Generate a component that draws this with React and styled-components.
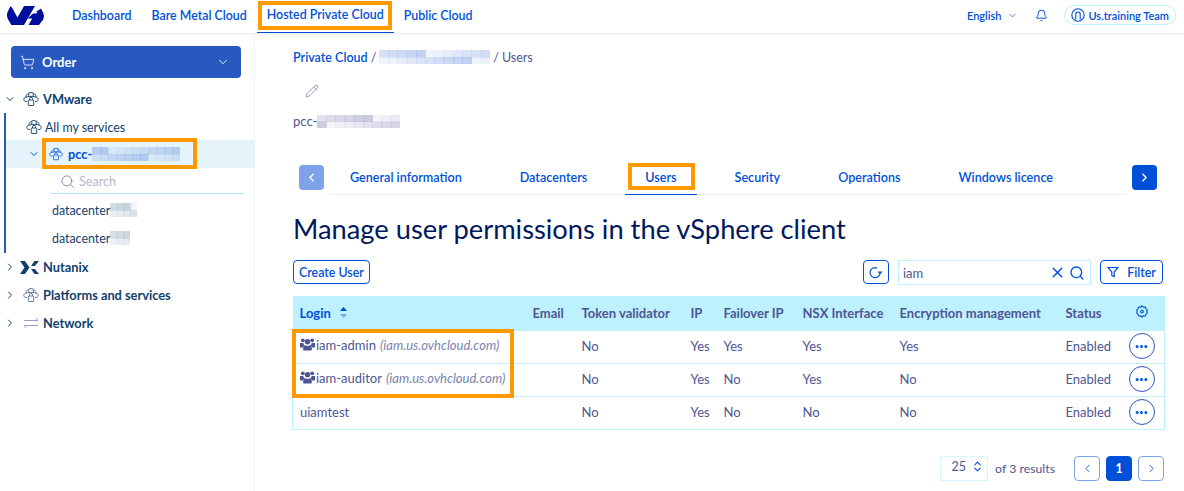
import React from "react";
import styled, { createGlobalStyle } from "styled-components";
import { ChevronDown, ChevronRight, ChevronLeft, ChevronsUpDown, X, Search, ShoppingCart, Bell, Pencil, Ellipsis } from "lucide-react";

const BLUE = "#0050d7";
const NAVY = "#00185e";
const TEXT = "#4d5693";
const ORANGE = "#ff9900";
const FONT = `"Lato", "Noto Sans", sans-serif`;

const Global = createGlobalStyle`
  html, body { margin: 0; padding: 0; height: 491px; overflow: hidden; background: #fff; }
  body { font-family: ${FONT}; font-size: 14px; color: ${TEXT}; }
  * { box-sizing: border-box; }
`;

const Page = styled.div`
  width: 1184px;
  height: 491px;
  display: flex;
  flex-direction: column;
  overflow: hidden;
`;

const TopBar = styled.header`
  height: 34px;
  flex: none;
  display: flex;
  align-items: stretch;
  padding: 0 8px 0 7px;
  border-bottom: 1px solid #eef0f7;
  box-shadow: 0 1px 2px rgba(0, 14, 156, 0.05);
`;

const LogoWrap = styled.div`
  width: 39px;
  display: flex;
  align-items: center;
  padding-bottom: 3px;
`;

const MainNav = styled.nav`
  display: flex;
  margin-left: 16px;
`;

const NavItem = styled.div`
  display: flex;
  align-items: center;
  height: 33px;
  padding: 0 10px 3px;
  color: ${BLUE};
  font-weight: 600;
  font-size: 12.4px;
  white-space: nowrap;
  position: relative;
  ${(p) => p.$active && `border-bottom: 1px solid ${BLUE};`}
`;

const Highlight = styled.span`
  position: absolute;
  border: 4px solid ${ORANGE};
  pointer-events: none;
`;

const TopRight = styled.div`
  margin-left: auto;
  display: flex;
  align-items: center;
  color: ${BLUE};
  font-weight: 600;
  font-size: 11px;
  padding-bottom: 3px;
`;

const Lang = styled.div`
  display: flex;
  align-items: center;
  gap: 6px;
  margin-right: 17px;
`;

const Pill = styled.div`
  display: flex;
  align-items: center;
  gap: 3px;
  height: 20px;
  margin-left: 16px;
  padding: 0 6px;
  border: 1px solid #bef1ff;
  border-radius: 10px;
`;

const Body = styled.div`
  flex: 1;
  display: flex;
  min-height: 0;
`;

const Sidebar = styled.aside`
  width: 255px;
  flex: none;
  border-right: 1px solid #eef0f7;
  padding-top: 12px;
`;

const OrderButton = styled.div`
  height: 32px;
  margin: 0 13px 0 11px;
  padding: 0 11px 0 9px;
  border-radius: 4px;
  background: #2859c0;
  color: #fff;
  font-weight: 700;
  font-size: 13px;
  display: flex;
  align-items: center;
  gap: 7px;
  svg:last-child { margin-left: auto; }
`;

const Tree = styled.div`
  margin-top: 7px;
`;

const TreeRow = styled.div`
  height: ${(p) => p.$height || 28}px;
  display: flex;
  align-items: center;
  padding-left: ${(p) => p.$indent || 0}px;
  padding-top: ${(p) => p.$nudge || 0}px;
  margin-top: ${(p) => p.$top || 0}px;
  font-size: ${(p) => (p.$strong ? 12.8 : 12.4)}px;
  color: #113f6d;
  font-weight: ${(p) => (p.$strong ? 700 : 400)};
  white-space: nowrap;
  background: ${(p) => (p.$selected ? "#e5f3fa" : "transparent")};
`;

const Caret = styled.span`
  width: 12px;
  display: inline-flex;
  justify-content: center;
  color: #113f6d;
  flex: none;
`;

const IconSlot = styled.span`
  width: ${(p) => p.$w || 18}px;
  margin: 0 ${(p) => p.$gap ?? 3}px 0 ${(p) => p.$left ?? 5}px;
  display: inline-flex;
  align-items: center;
  justify-content: center;
  flex: none;
`;

const Branch = styled.div`
  margin-left: 4px;
  padding-bottom: 1px;
  border-left: 2px solid #2859c0;
`;

const SelectedLabel = styled.span`
  display: flex;
  align-items: center;
  position: relative;
  color: ${BLUE};
  font-size: 12.8px;
  font-weight: 700;
`;

const TreeSearch = styled.div`
  height: 25px;
  margin: 1px 10px 0 45px;
  display: flex;
  align-items: center;
  gap: 4px;
  padding-left: 9px;
  border-bottom: 1px solid #a8e4fb;
  color: #b4b9d0;
  font-size: 12.6px;
`;

const Content = styled.main`
  flex: 1;
  padding: 14px 21px 0 38px;
  min-width: 0;
`;

const Breadcrumb = styled.div`
  height: 18px;
  display: flex;
  align-items: center;
  gap: 3px;
  font-size: 12.5px;
  color: ${TEXT};
  a { color: ${BLUE}; font-weight: 600; }
`;

const EditIcon = styled.div`
  margin: 18px 0 0 12px;
  height: 16px;
  color: #5f6796;
`;

const PccName = styled.div`
  margin-top: 12px;
  height: 18px;
  display: flex;
  align-items: center;
  font-size: 13px;
`;

const TabBar = styled.div`
  margin: 35px 6px 0 6px;
  display: flex;
  align-items: flex-start;
  gap: 6px;
`;

const ArrowButton = styled.div`
  width: 25px;
  height: 25px;
  flex: none;
  border-radius: 4px;
  display: flex;
  align-items: center;
  justify-content: center;
  color: #fff;
  background: ${(p) => (p.$off ? "#7fa3e8" : BLUE)};
`;

const Tabs = styled.div`
  flex: 1;
  height: 30px;
  display: flex;
  gap: 18px;
  border-bottom: 1px solid #e6f3fb;
`;

const Tab = styled.div`
  position: relative;
  height: 30px;
  padding: 0 20px 5px;
  display: flex;
  align-items: center;
  color: ${BLUE};
  font-size: 12.6px;
  font-weight: 600;
  white-space: nowrap;
  ${(p) => p.$active && `border-bottom: 1px solid ${BLUE};`}
`;

const Title = styled.h1`
  margin: 16px 0 0;
  height: 36px;
  line-height: 36px;
  font-size: 27.3px;
  font-weight: 400;
  color: ${NAVY};
`;

const Toolbar = styled.div`
  margin-top: 13px;
  display: flex;
  align-items: flex-start;
`;

const OutlineButton = styled.div`
  height: 24px;
  min-width: ${(p) => p.$min || 0}px;
  padding: 0 5px;
  border: 1px solid ${BLUE};
  border-radius: 4px;
  display: flex;
  align-items: center;
  justify-content: center;
  gap: 8px;
  color: ${BLUE};
  font-weight: 600;
  font-size: 12.4px;
  background: #fff;
  ${(p) => p.$push && "margin-left: auto;"}
`;

const SearchBox = styled.div`
  width: 193px;
  height: 25px;
  margin: 0 9px 0 9px;
  padding: 0 5px 0 4px;
  border: 1px solid #bef1ff;
  display: flex;
  align-items: center;
  gap: 3px;
  font-size: 13px;
  span { margin-right: auto; }
  color: ${TEXT};
`;

const TableWrap = styled.div`
  position: relative;
  margin: 11px 0 0 -1px;
  width: 872px;
`;

const Table = styled.table`
  width: 872px;
  border-collapse: collapse;
  table-layout: fixed;
  font-size: 13px;
  th {
    height: 34px;
    background: #bef1ff;
    text-align: left;
    font-weight: 700;
    padding: 0 0 0 8px;
    color: ${TEXT};
    white-space: nowrap;
  }
  th:first-child { padding-left: 7px; }
  td {
    height: 33px;
    padding: 0 0 1px 8px;
    white-space: nowrap;
    border-top: 1px solid #bef1ff;
    border-bottom: 1px solid #bef1ff;
  }
  td:first-child { border-left: 1px solid #bef1ff; padding-left: 7px; }
  td:last-child { border-right: 1px solid #bef1ff; padding-left: 1px; }
`;

const SortHead = styled.span`
  display: inline-flex;
  align-items: center;
  gap: 9px;
  color: ${BLUE};
`;

const UserName = styled.span`
  display: inline-flex;
  align-items: center;
  gap: 1px;
  em { color: #7b82ad; margin-left: 3px; }
`;

const CircleButton = styled.div`
  width: 26px;
  height: 26px;
  border: 1px solid #2859c0;
  border-radius: 50%;
  display: flex;
  align-items: center;
  justify-content: center;
  color: ${BLUE};
`;

const Pagination = styled.div`
  margin: 26px -1px 0 0;
  display: flex;
  align-items: center;
  justify-content: flex-end;
  font-size: 12.3px;
`;

const PageSize = styled.div`
  width: 48px;
  height: 25px;
  border: 1px solid #d6f5ff;
  display: flex;
  align-items: center;
  justify-content: flex-end;
  gap: 5px;
  padding: 0 3px 3px 0;
  font-size: 12.5px;
`;

const Results = styled.span`
  margin: 0 19px 0 7px;
`;

const PageButton = styled.div`
  width: 26px;
  height: 25px;
  margin-left: ${(p) => (p.$first ? 0 : 6)}px;
  border-radius: 4px;
  border: 1px solid ${(p) => (p.$active ? BLUE : "#7fa3e8")};
  background: ${(p) => (p.$active ? BLUE : "#fff")};
  color: ${(p) => (p.$active ? "#fff" : "#7fa3e8")};
  font-weight: 700;
  display: flex;
  align-items: center;
  justify-content: center;
`;

// pixelated redaction blocks from the screenshot
const Mosaic = ({ width, height = 14, cols, seed = 1, tint = "80,125,215" }) => {
  const rows = 2;
  const cw = width / cols;
  const rects = [];
  for (let r = 0; r < rows; r++) {
    for (let c = 0; c < cols; c++) {
      const v = ((c * 7 + r * 5 + seed * 3) * 13) % 10;
      rects.push(
        <rect key={`${r}-${c}`} x={c * cw} y={(r * height) / rows} width={cw + 0.5} height={height / rows + 0.5}
          fill={`rgba(${tint},${0.08 + v * 0.03})`} />
      );
    }
  }
  return <svg width={width} height={height} style={{ flex: "none" }}>{rects}</svg>;
};

const Logo = () => (
  <svg width="37" height="21" viewBox="0 0 37 21">
    <path fill="#000e9c" d="M3.5 1 0.6 7c-1 2.500-.8 5 .6 7.500L4.300 20H17L28 1H17l-6.500 11.500L5.500 3.500z" />
    <path fill="#000e9c" d="M34 3.500 36.300 8c.9 2.200.8 4.700-.4 6.900L32 20H21.500l3.700-6.500H20.500L26 8.500h3.300l1.200-1.500-1.500-.2z" />
  </svg>
);

const CloudLock = ({ size = 16, color = "#113f6d" }) => (
  <svg width={size} height={size} viewBox="0 0 16 16" fill="none" stroke={color} strokeWidth="0.9">
    <path d="M4 10.500H3C1.600 10.500.8 9.400.8 8.300c0-1.200.9-2 2-2.100C3 3.600 5.400 1.500 8 1.500s5 2.100 5.200 4.700c1.100.1 2 .9 2 2.100 0 1.100-.8 2.200-2.200 2.200h-1" />
    <path d="M3 6.200c1.500-.5 3-.8 5-.8s3.500.3 5 .8M6 2.500 5.500 6M10 2.500l.5 3.500" />
    <rect x="5.300" y="9" width="5.400" height="5.500" rx="0.6" />
    <path d="M6.500 9V7.800a1.500 1.500 0 0 1 3 0V9" />
  </svg>
);

const NutanixLogo = () => (
  <svg width="19" height="13" viewBox="0 0 19 13">
    <path fill="#113f6d" d="M0 0h5l4.500 6.500L5 13H0l4.500-6.500zM19 0h-4.500L11 5h3.800zM19 13h-4.500L11 8h3.800z" />
  </svg>
);

const NetworkIcon = () => (
  <svg width="16" height="12" viewBox="0 0 16 12" fill="none" stroke="#9aa0c0" strokeWidth="1">
    <path d="M1 3.500h14M12.500 1 15 3.500M15 8.500H1M3.500 11 1 8.500" />
  </svg>
);

const Gear = () => (
  <svg width="12" height="13" viewBox="0 0 12 13" fill="none" stroke={BLUE} strokeWidth="1.100">
    <path d="M6 .8 7.300 2.100 9.300 2 10 3.800 11.300 5 10.800 6.500 11.300 8 10 9.200 9.300 11 7.300 10.900 6 12.200 4.700 10.900 2.700 11 2 9.200 .7 8 1.200 6.500 .7 5 2 3.800 2.700 2 4.700 2.100z" />
    <circle cx="6" cy="6.500" r="1.300" />
  </svg>
);

const Refresh = () => (
  <svg width="14" height="13" viewBox="0 0 14 13" fill="none" stroke={BLUE} strokeWidth="1.200">
    <path d="M11 7.500A5 5 0 1 1 8 2H5.500" />
    <path d="M8.500 5.500h5L11 8.500z" fill={BLUE} stroke="none" />
  </svg>
);

const FunnelIcon = () => (
  <svg width="12" height="12" viewBox="0 0 12 12" fill="none" stroke={BLUE} strokeWidth="1.200">
    <path d="M1 1.500h10L7.200 6v4.500l-2.400-1V6z" />
  </svg>
);

const AccountIcon = () => (
  <svg width="14" height="14" viewBox="0 0 14 14" fill="none" stroke={BLUE} strokeWidth="1.100">
    <circle cx="7" cy="7" r="6.200" />
    <path d="M4.800 11.500V6.200a2.200 2.200 0 0 1 4.400 0v5.300" />
  </svg>
);

const SortIcon = () => (
  <svg width="7" height="11" viewBox="0 0 7 11">
    <path fill={BLUE} d="M3.500 0 7 4H0z" />
    <path fill="#7fa3e8" d="M3.500 11 0 7h7z" />
  </svg>
);

const UsersIcon = () => (
  <svg width="15" height="15" viewBox="0 0 15 15" fill={TEXT}>
    <circle cx="7.500" cy="4.800" r="2.700" />
    <circle cx="2.800" cy="3.300" r="1.900" />
    <circle cx="12.200" cy="3.300" r="1.900" />
    <path d="M0 6h3.300c.2 1.200.7 1.900 1.400 2.400C3.500 9 2.900 10 2.800 10.500H1c-.6 0-1-.4-1-1zM15 6h-3.300c-.2 1.200-.7 1.900-1.400 2.400 1.200.6 1.800 1.600 1.900 2.100H14c.6 0 1-.4 1-1z" />
    <path d="M5 8.200c1.500 1 3.500 1 5 0 1.300.3 1.800 1.400 1.800 2.800v1.500c0 .6-.5 1-1 1H4.200c-.5 0-1-.4-1-1V11c0-1.400.5-2.500 1.800-2.800z" />
  </svg>
);

const rows = [
  { name: "iam-admin", domain: "(iam.us.ovhcloud.com)", group: true, vals: ["No", "Yes", "Yes", "Yes", "Yes"] },
  { name: "iam-auditor", domain: "(iam.us.ovhcloud.com)", group: true, vals: ["No", "Yes", "No", "Yes", "No"] },
  { name: "uiamtest", vals: ["No", "Yes", "No", "No", "No"] },
];

const columns = [232, 49, 109, 33, 79, 97, 166, 70, 37];
const tabs = ["General information", "Datacenters", "Users", "Security", "Operations", "Windows licence"];

export default function App() {
  return (
    <Page>
      <Global />
      <TopBar>
        <LogoWrap><Logo /></LogoWrap>
        <MainNav>
          <NavItem>Dashboard</NavItem>
          <NavItem>Bare Metal Cloud</NavItem>
          <NavItem $active>
            Hosted Private Cloud
            <Highlight style={{ left: 1, right: 2, top: 1, bottom: 2 }} />
          </NavItem>
          <NavItem>Public Cloud</NavItem>
        </MainNav>
        <TopRight>
          <Lang>English <ChevronDown size={11} strokeWidth={1.500} /></Lang>
          <Bell size={13} strokeWidth={1.800} />
          <Pill><AccountIcon /> Us.training Team</Pill>
        </TopRight>
      </TopBar>
      <Body>
        <Sidebar>
          <OrderButton>
            <ShoppingCart size={15} strokeWidth={1.300} />
            Order
            <ChevronDown size={14} strokeWidth={1.500} />
          </OrderButton>
          <Tree>
            <TreeRow $strong $indent={4}>
              <Caret><ChevronDown size={12} /></Caret>
              <IconSlot $left={7} $gap={4} $w={16}><CloudLock /></IconSlot>VMware
            </TreeRow>
            <Branch>
              <TreeRow $indent={18} $height={27} $nudge={1}>
                <IconSlot $left={2} $gap={3} $w={16}><CloudLock /></IconSlot>All my services
              </TreeRow>
              <TreeRow $selected $indent={22}>
                <Caret><ChevronDown size={12} color={BLUE} /></Caret>
                <SelectedLabel>
                  <Highlight style={{ left: 2, right: -17, top: -8, bottom: -7 }} />
                  <IconSlot $left={9} $gap={5} $w={14}><CloudLock size={14} color={BLUE} /></IconSlot>
                  pcc-<Mosaic width={88} cols={11} seed={2} />
                </SelectedLabel>
              </TreeRow>
              <TreeSearch><Search size={15} strokeWidth={1.200} color="#5f6796" />Search</TreeSearch>
              <TreeRow $indent={46} $top={2}>datacenter<Mosaic width={27} cols={4} seed={3} tint="100,130,160" /></TreeRow>
              <TreeRow $indent={46}>datacenter<Mosaic width={20} cols={3} seed={4} tint="100,130,160" /></TreeRow>
            </Branch>
            <TreeRow $strong $indent={4}>
              <Caret><ChevronRight size={12} /></Caret>
              <IconSlot $left={4} $gap={4} $w={19}><NutanixLogo /></IconSlot>Nutanix
            </TreeRow>
            <TreeRow $strong $indent={4}>
              <Caret><ChevronRight size={12} /></Caret>
              <IconSlot $left={7} $gap={4} $w={16}><CloudLock color="#5f6f96" /></IconSlot>Platforms and services
            </TreeRow>
            <TreeRow $strong $indent={4}>
              <Caret><ChevronRight size={12} /></Caret>
              <IconSlot $left={7} $gap={4} $w={16}><NetworkIcon /></IconSlot>Network
            </TreeRow>
          </Tree>
        </Sidebar>
        <Content>
          <Breadcrumb>
            <a>Private Cloud</a> /<Mosaic width={111} cols={12} seed={5} />/<span>Users</span>
          </Breadcrumb>
          <EditIcon><Pencil size={14} strokeWidth={1.100} /></EditIcon>
          <PccName>pcc-<Mosaic width={83} cols={9} seed={6} tint="110,110,170" height={13} /></PccName>
          <TabBar>
            <ArrowButton $off><ChevronLeft size={13} strokeWidth={2.500} /></ArrowButton>
            <Tabs>
              {tabs.map((t) => (
                <Tab key={t} $active={t === "Users"}>
                  {t}
                  {t === "Users" && <Highlight style={{ left: 3, right: 2, top: -2, bottom: 4 }} />}
                </Tab>
              ))}
            </Tabs>
            <ArrowButton><ChevronRight size={13} strokeWidth={2.500} /></ArrowButton>
          </TabBar>
          <Title>Manage user permissions in the vSphere client</Title>
          <Toolbar>
            <OutlineButton>Create User</OutlineButton>
            <OutlineButton $min={25} $push><Refresh /></OutlineButton>
            <SearchBox>
              <span>iam</span>
              <X size={17} color={BLUE} strokeWidth={2} />
              <Search size={16} color={BLUE} strokeWidth={2} />
            </SearchBox>
            <OutlineButton $min={63}><FunnelIcon />Filter</OutlineButton>
          </Toolbar>
          <TableWrap>
            <Highlight style={{ left: 0, top: 33, width: 222, height: 69, zIndex: 1 }} />
            <Table>
              <colgroup>
                {columns.map((w, i) => <col key={i} style={{ width: w }} />)}
              </colgroup>
              <thead>
                <tr>
                  <th><SortHead>Login <SortIcon /></SortHead></th>
                  <th>Email</th>
                  <th>Token validator</th>
                  <th>IP</th>
                  <th>Failover IP</th>
                  <th>NSX Interface</th>
                  <th>Encryption management</th>
                  <th>Status</th>
                  <th><Gear /></th>
                </tr>
              </thead>
              <tbody>
                {rows.map((r) => (
                  <tr key={r.name}>
                    <td>
                      <UserName>
                        {r.group && <UsersIcon />}
                        {r.name}{r.domain && <em>{r.domain}</em>}
                      </UserName>
                    </td>
                    <td />
                    {r.vals.map((v, i) => <td key={i}>{v}</td>)}
                    <td>Enabled</td>
                    <td>
                      <CircleButton><Ellipsis size={15} strokeWidth={3} /></CircleButton>
                    </td>
                  </tr>
                ))}
              </tbody>
            </Table>
          </TableWrap>
          <Pagination>
            <PageSize>25 <ChevronsUpDown size={13} color={BLUE} strokeWidth={2} /></PageSize>
            <Results>of 3 results</Results>
            <PageButton $first><ChevronLeft size={13} /></PageButton>
            <PageButton $active>1</PageButton>
            <PageButton><ChevronRight size={13} /></PageButton>
          </Pagination>
        </Content>
      </Body>
    </Page>
  );
}
